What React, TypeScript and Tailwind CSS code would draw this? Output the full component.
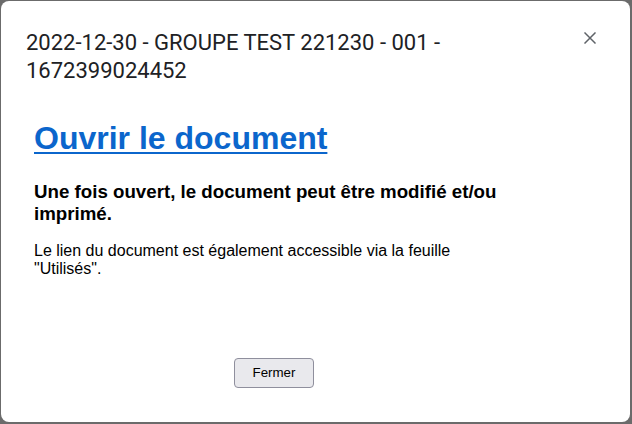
import React from "react";

export default function App() {
  return (
    <div className="w-[632px] h-[424px] bg-[#6b6b6b] pt-px pl-px">
      <div className="w-[629px] h-[421px] bg-white rounded-[8px] flex flex-col">
        <header className="flex items-start justify-between pl-[25px] pr-[32px] pt-[28px]">
          <h1
            className="w-[500px] text-[22px] leading-[28px] font-normal text-[#202124]"
            style={{ fontFamily: "Roboto, 'Noto Sans', sans-serif" }}
          >
            2022-12-30 - GROUPE TEST 221230 - 001 - 1672399024452
          </h1>
          <button className="mt-[1px] w-[16px] h-[16px] flex items-center justify-center text-[#5f6368]" aria-label="close">
            <svg width="12" height="12" viewBox="0 0 12 12" fill="none" stroke="currentColor" strokeWidth="1.5" strokeLinecap="square">
              <path d="M1 1L11 11M11 1L1 11" />
            </svg>
          </button>
        </header>
        <div
          className="pl-[33px] mt-[35px] text-black"
          style={{ fontFamily: "'Liberation Sans', Arial, sans-serif" }}
        >
          <a href="#" className="block w-fit text-[32px] leading-[36px] font-bold text-[#0b66cc] underline decoration-2 underline-offset-[3px]">
            Ouvrir le document
          </a>
          <p className="mt-[25px] w-[478px] text-[18.72px] leading-[22px] font-bold">
            Une fois ouvert, le document peut être modifié et/ou imprimé.
          </p>
          <p className="mt-[17px] w-[478px] text-[16px] leading-[18px]">
            Le lien du document est également accessible via la feuille "Utilisés".
          </p>
          <div className="mt-[80px] pl-[200px]">
            <button className="w-[80px] h-[30px] rounded-[4px] border border-[#8f8f9d] bg-[#e9e9ed] text-[13.33px] text-black">
              Fermer
            </button>
          </div>
        </div>
      </div>
    </div>
  );
}
